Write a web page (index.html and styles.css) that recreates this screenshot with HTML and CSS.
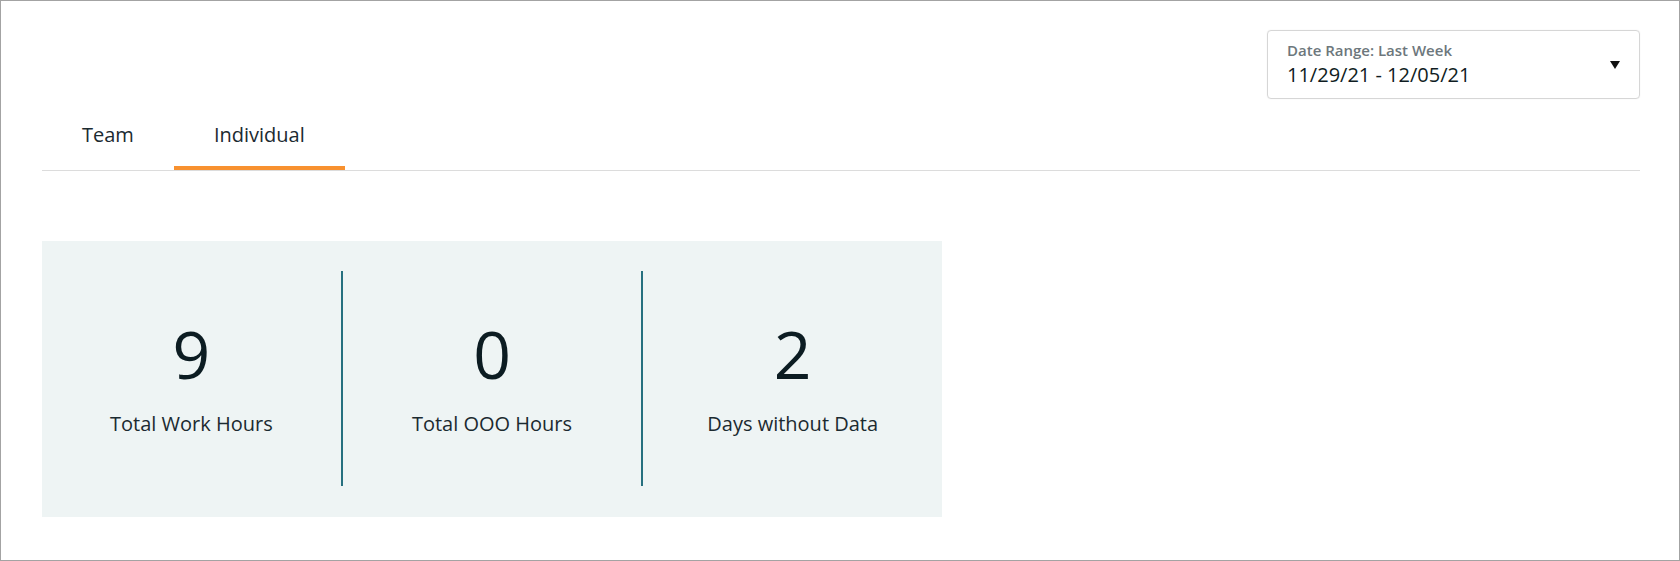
FILE: index.html
```html
<!DOCTYPE html>
<html lang="en">
<head>
<meta charset="utf-8">
<title>Individual</title>
<link rel="stylesheet" href="styles.css">
</head>
<body>
<div class="page">
  <div class="header">
    <div class="range">
      <div class="range-text">
        <div class="range-label">Date Range: Last Week</div>
        <div class="range-value">11/29/21 - 12/05/21</div>
      </div>
      <span class="caret"></span>
    </div>
  </div>
  <div class="tabs">
    <div class="tab">Team</div>
    <div class="tab active">Individual</div>
  </div>
  <div class="stats">
    <div class="stat">
      <div class="stat-num">9</div>
      <div class="stat-label">Total Work Hours</div>
    </div>
    <div class="stat">
      <div class="stat-num">0</div>
      <div class="stat-label">Total OOO Hours</div>
    </div>
    <div class="stat">
      <div class="stat-num">2</div>
      <div class="stat-label">Days without Data</div>
    </div>
  </div>
</div>
</body>
</html>
```

FILE: styles.css
```css
* { box-sizing: border-box; }
html, body { margin: 0; padding: 0; background: #fff; }
body { font-family: "Open Sans", "Noto Sans", sans-serif; color: #1b2a30; }

.page {
  width: 1680px;
  height: 561px;
  border: 1px solid #a3a3a3;
  padding: 29px 39px 0 41px;
  overflow: hidden;
}

.header { display: flex; justify-content: flex-end; }

.range {
  width: 373px;
  height: 69px;
  border: 1px solid #d6d6d6;
  border-radius: 4px;
  box-shadow: 0 0 1px rgba(0,0,0,0.12);
  padding: 9px 19px 10px 19px;
  display: flex;
  align-items: center;
  justify-content: space-between;
}
.range-text { align-self: flex-start; }
.range-label {
  font-size: 15px;
  line-height: 20px;
  font-weight: 600;
  color: #6d777c;
}
.range-value {
  font-size: 20px;
  line-height: 24px;
  margin-top: 3px;
  color: #0f1c22;
}
.caret {
  width: 0; height: 0;
  border-left: 5px solid transparent;
  border-right: 5px solid transparent;
  border-top: 8px solid #111;
  margin-top: 2px;
}

.tabs {
  display: flex;
  border-bottom: 1px solid #dcdcdc;
}
.tab {
  font-size: 20px;
  line-height: 27px;
  padding: 22px 40px 18px 40px;
  border-bottom: 4px solid transparent;
  color: #1b2a30;
}
.tab.active { border-bottom-color: #f8912f; }

.stats {
  margin-top: 70px;
  width: 900px;
  height: 276px;
  background: #eef4f4;
  padding: 30px 0 31px;
  display: flex;
}
.stat {
  flex: 1;
  display: flex;
  flex-direction: column;
  align-items: center;
  justify-content: center;
  border-right: 2px solid #26707f;
}
.stat:last-child { border-right: none; }
.stat-num {
  font-size: 66px;
  line-height: 66px;
  font-weight: 500;
  color: #0c1c22;
  margin-bottom: 24px;
}
.stat-label {
  font-size: 20px;
  line-height: 27px;
  color: #1b2a30;
}
```
